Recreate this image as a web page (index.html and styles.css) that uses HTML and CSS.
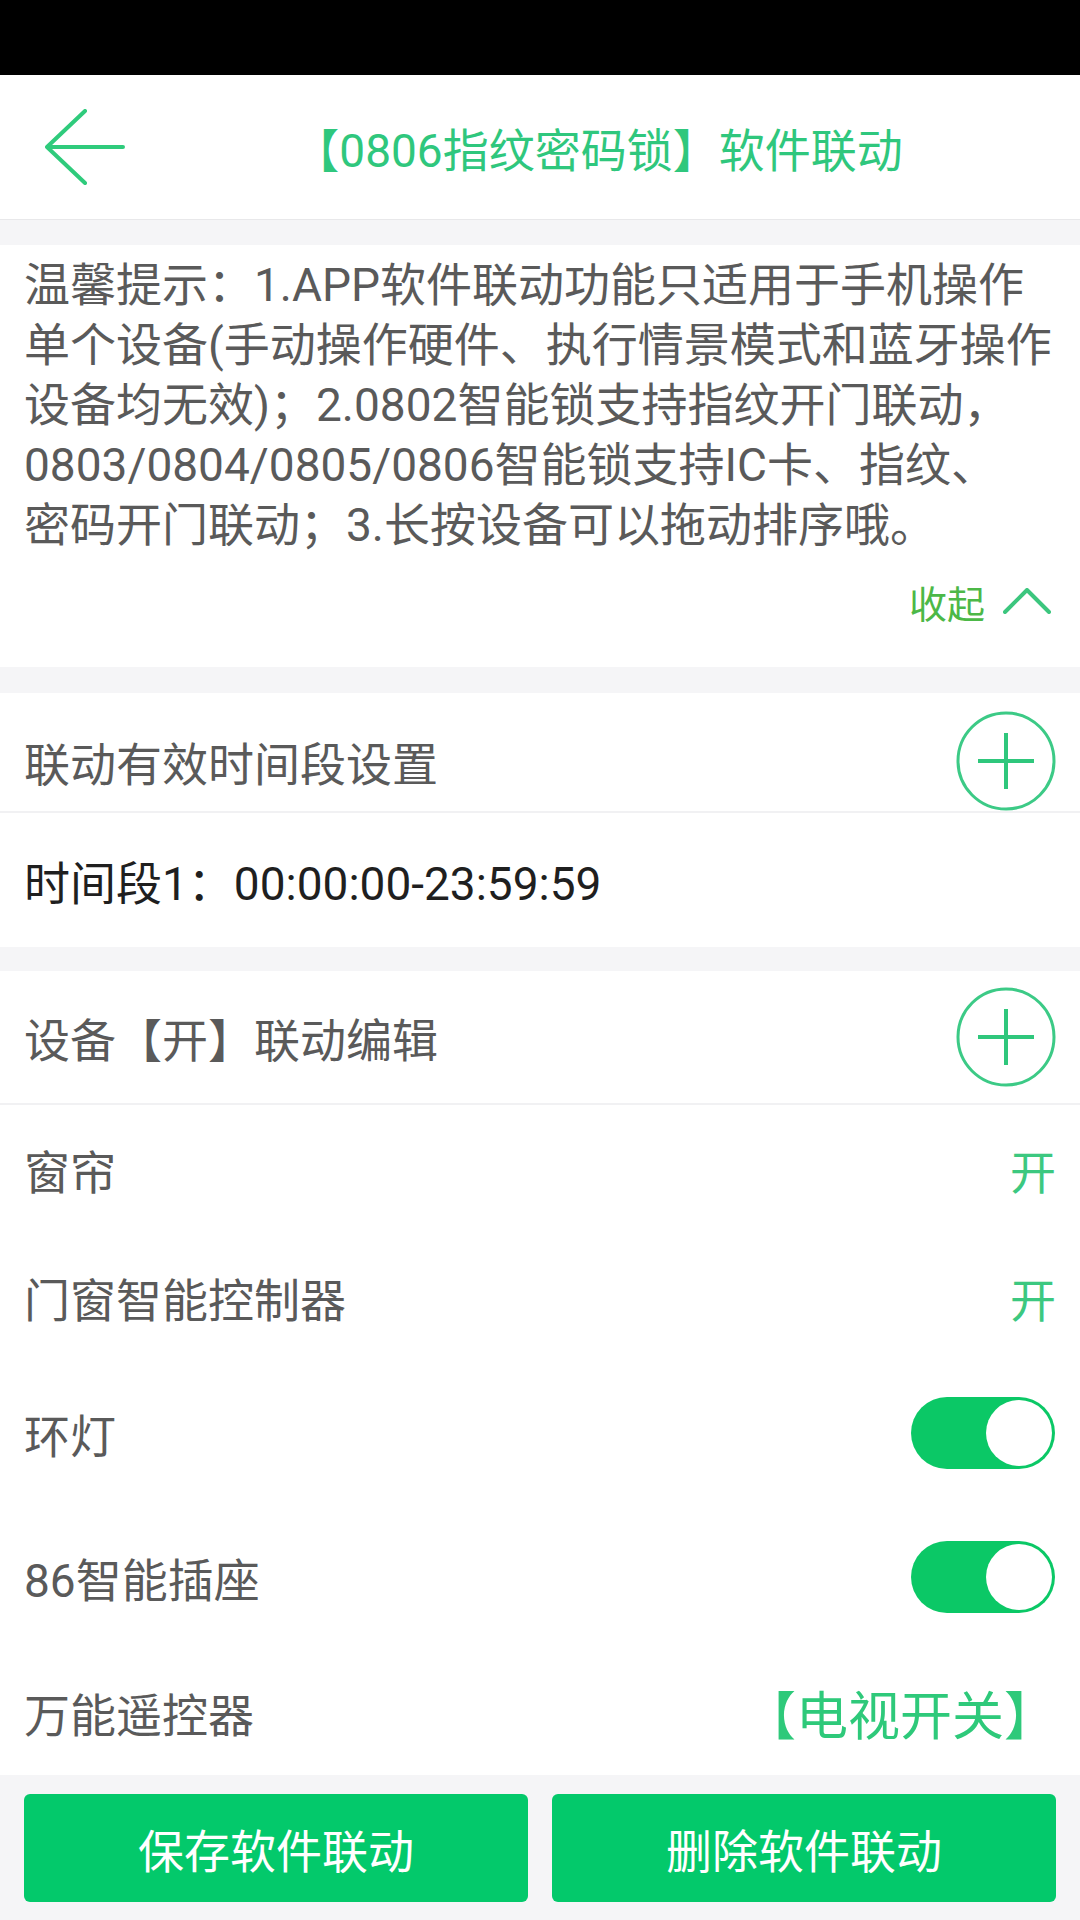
FILE: index.html
```html
<!DOCTYPE html>
<html lang="zh-CN">
<head>
  <meta charset="UTF-8">
  <meta name="viewport" content="width=device-width, initial-scale=1.0">
  <title>软件联动</title>
  <link rel="stylesheet" href="styles.css">
</head>
<body>
  <div class="status-bar"></div>

  <header class="top-bar">
    <div class="back">
      <svg width="80" height="76" viewBox="0 0 80 76">
        <path d="M40 2 L2 38 L40 74 M2 38 H78" fill="none" stroke="#2fcb7c" stroke-width="4" stroke-linecap="round" stroke-linejoin="round"/>
      </svg>
    </div>
    <h1 class="title">【0806指纹密码锁】软件联动</h1>
  </header>

  <section class="panel tip">
    <p class="tip-text">温馨提示：1.APP软件联动功能只适用于手机操作单个设备(手动操作硬件、执行情景模式和蓝牙操作设备均无效)；2.0802智能锁支持指纹开门联动，0803/0804/0805/0806智能锁支持IC卡、指纹、<br>密码开门联动；3.长按设备可以拖动排序哦。</p>
    <div class="collapse">
      <span>收起</span>
      <svg width="48" height="26" viewBox="0 0 48 26">
        <path d="M2 24 L24 2 L46 24" fill="none" stroke="#3cc67e" stroke-width="4" stroke-linecap="round" stroke-linejoin="round"/>
      </svg>
    </div>
  </section>

  <section class="panel time-panel">
    <div class="panel-head first">
      <span>联动有效时间段设置</span>
      <svg class="add" width="100" height="100" viewBox="0 0 100 100">
        <circle cx="50" cy="50" r="48" fill="none" stroke="#3cca86" stroke-width="3"/>
        <path d="M22 50 H78 M50 22 V78" stroke="#2fc77c" stroke-width="4"/>
      </svg>
    </div>
    <div class="time-row">时间段1：00:00:00-23:59:59</div>
  </section>

  <section class="panel device-panel">
    <div class="panel-head">
      <span>设备【开】联动编辑</span>
      <svg class="add" width="100" height="100" viewBox="0 0 100 100">
        <circle cx="50" cy="50" r="48" fill="none" stroke="#3cca86" stroke-width="3"/>
        <path d="M22 50 H78 M50 22 V78" stroke="#2fc77c" stroke-width="4"/>
      </svg>
    </div>
    <div class="row"><span>窗帘</span><span class="state">开</span></div>
    <div class="row"><span>门窗智能控制器</span><span class="state">开</span></div>
    <div class="row tall"><span>环灯</span><span class="switch"><span class="knob"></span></span></div>
    <div class="row tall"><span>86智能插座</span><span class="switch"><span class="knob"></span></span></div>
    <div class="row last"><span>万能遥控器</span><span class="remote">【电视开关】</span></div>
  </section>

  <footer class="actions">
    <button>保存软件联动</button>
    <button>删除软件联动</button>
  </footer>
</body>
</html>
```

FILE: styles.css
```css
body {
  margin: 0;
  width: 1080px;
  height: 1920px;
  overflow: hidden;
  background-color: #f5f5f7;
  font-family: Roboto, "Noto Sans CJK JP", sans-serif;
  color: #5a5a5a;
}
.status-bar {
  height: 75px;
  background-color: #000;
}
.top-bar {
  display: grid;
  grid-template-columns: 116px 1fr;
  align-items: center;
  height: 144px;
  background-color: #fff;
  border-bottom: 1px solid #e8e8ea;
}
.back {
  display: flex;
  align-items: center;
  padding-left: 45px;
}
.back svg {
  display: block;
  flex-shrink: 0;
}
.title {
  margin: 0;
  text-align: center;
  font-size: 46px;
  font-weight: normal;
  color: #2fc77d;
}
.panel {
  background-color: #fff;
}
.tip {
  margin-top: 25px;
  padding: 10px 24px 36px;
}
.tip-text {
  margin: 0;
  font-size: 46px;
  line-height: 60px;
  color: #5a5a5a;
}
.collapse {
  display: flex;
  justify-content: flex-end;
  align-items: center;
  gap: 18px;
  height: 60px;
  margin-top: 16px;
  padding-right: 5px;
  font-size: 38px;
  color: #4cb847;
}
.time-panel {
  margin-top: 26px;
}
.device-panel {
  margin-top: 24px;
}
.panel-head {
  display: flex;
  justify-content: space-between;
  align-items: center;
  height: 132px;
  padding: 0 24px;
  border-bottom: 2px solid #f1f1f3;
  font-size: 46px;
}
.panel-head.first {
  height: 100px;
  padding-top: 18px;
}
.add {
  display: block;
}
.time-row {
  display: flex;
  align-items: center;
  height: 134px;
  padding: 0 24px;
  font-size: 46px;
  color: #1f1f1f;
}
.row {
  display: flex;
  justify-content: space-between;
  align-items: center;
  height: 128px;
  padding: 0 24px;
  font-size: 46px;
}
.row.tall {
  height: 144px;
  padding-right: 25px;
}
.row.last {
  height: 126px;
}
.state {
  color: #3cc880;
}
.remote {
  font-size: 52px;
  color: #2ec97a;
}
.switch {
  display: flex;
  justify-content: flex-end;
  align-items: center;
  width: 144px;
  height: 72px;
  padding: 3px;
  box-sizing: border-box;
  border-radius: 36px;
  background-color: #0bc866;
}
.knob {
  width: 66px;
  height: 66px;
  border-radius: 50%;
  background-color: #fff;
}
.actions {
  display: flex;
  gap: 24px;
  padding: 19px 24px 18px;
}
.actions button {
  flex: 1;
  height: 108px;
  border: none;
  border-radius: 6px;
  background-color: #03c96b;
  color: #fff;
  font-family: Roboto, "Noto Sans CJK JP", sans-serif;
  font-size: 46px;
}
```
